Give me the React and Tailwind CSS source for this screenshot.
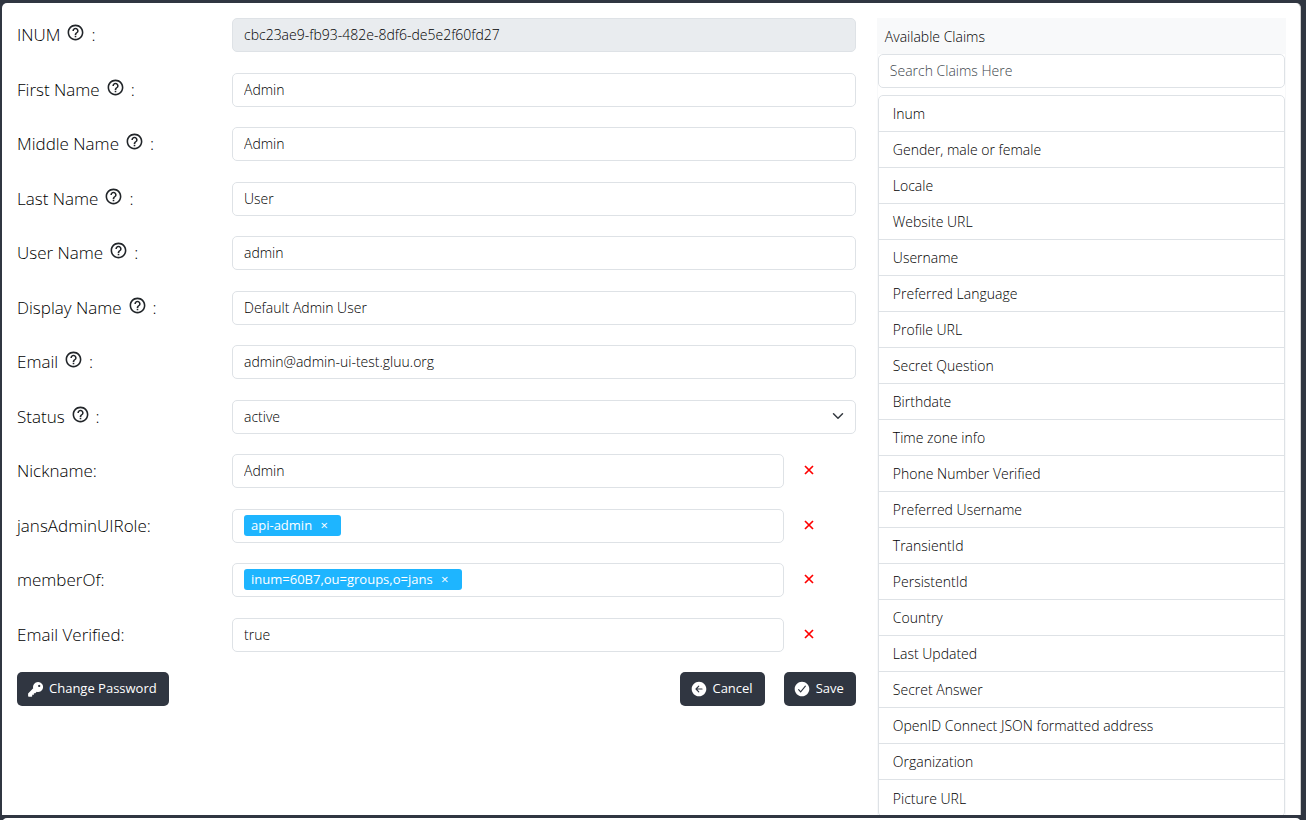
import React, { useState } from "react";
import { MdHelpOutline } from "react-icons/md";
import { IoArrowBackCircle, IoCheckmarkCircle } from "react-icons/io5";

const profileFields = [
  { id: "inum", label: "INUM", value: "cbc23ae9-fb93-482e-8df6-de5e2f60fd27", disabled: true },
  { id: "givenName", label: "First Name", value: "Admin" },
  { id: "middleName", label: "Middle Name", value: "Admin" },
  { id: "sn", label: "Last Name", value: "User" },
  { id: "userId", label: "User Name", value: "admin" },
  { id: "displayName", label: "Display Name", value: "Default Admin User" },
  { id: "mail", label: "Email", value: "admin@admin-ui-test.gluu.org" },
  { id: "status", label: "Status", value: "active", options: ["active", "inactive"] },
];

const initialClaims = [
  { id: "nickname", label: "Nickname", value: "Admin" },
  { id: "jansAdminUIRole", label: "jansAdminUIRole", tags: ["api-admin"] },
  { id: "memberOf", label: "memberOf", tags: ["inum=60B7,ou=groups,o=jans"] },
  { id: "emailVerified", label: "Email Verified", value: "true" },
];

const availableClaims = [
  "Inum",
  "Gender, male or female",
  "Locale",
  "Website URL",
  "Username",
  "Preferred Language",
  "Profile URL",
  "Secret Question",
  "Birthdate",
  "Time zone info",
  "Phone Number Verified",
  "Preferred Username",
  "TransientId",
  "PersistentId",
  "Country",
  "Last Updated",
  "Secret Answer",
  "OpenID Connect JSON formatted address",
  "Organization",
  "Picture URL",
];

const inputClass =
  "block h-[34px] w-full rounded-[5px] border border-[#dee2e6] bg-white px-[11px] pb-[2px] text-[14px] font-light text-black outline-none focus:border-[#86b7fe] disabled:bg-[#e9ecef]";

const KeyIcon = () => (
  <svg viewBox="0 0 15 15" className="size-[15px]" fill="currentColor">
    <path
      fillRule="evenodd"
      d="M10 0a5 5 0 1 1-1.3 9.8L7.3 11.2H5.9V12.8H4.2V14.1Q4.2 14.8 3.5 14.8H0.8Q0.1 14.8 0.1 14.1V11.5L5.2 6.3A5 5 0 0 1 10 0zM11.2 2.8a1.1 1.1 0 1 0 .01 0z"
    />
  </svg>
);

const FieldRow = ({ id, label, help, onRemove, children }) => (
  <div className="flex odd:mb-[21px] even:mb-5">
    <label htmlFor={id} className="flex h-[34px] w-[215px] shrink-0 items-center text-[17px] font-light whitespace-pre text-black">
      {label}
      {help && <MdHelpOutline className="mx-[6px] mb-[5px] size-[19px] text-[#212529]" />}
      {":"}
    </label>
    <div className="min-w-0 flex-1">{children}</div>
    {onRemove && (
      <div className="w-[72px] shrink-0 pl-[18px]">
        <button type="button" aria-label={`Remove ${label}`} onClick={onRemove} className="flex h-8 w-[14px] items-center justify-center">
          <svg viewBox="0 0 10 10" className="size-[10px]" stroke="#ff0000" strokeWidth="1.7" fill="none">
            <path d="M1 1 L9 9 M9 1 L1 9" />
          </svg>
        </button>
      </div>
    )}
  </div>
);

const TagInput = ({ id, tags }) => {
  const [selected, setSelected] = useState(tags);

  return (
    <div className="flex h-[34px] items-center rounded-[5px] border border-[#dee2e6] px-[11px]">
      {selected.map((tag) => (
        <span key={tag} className="mr-1 mb-px flex h-[21px] shrink-0 items-center rounded-[3px] bg-[#1eb5ff] pr-[5px] pl-[7px] text-[13px] text-white">
          {tag}
          <button
            type="button"
            aria-label={`Remove ${tag}`}
            onClick={() => setSelected(selected.filter((t) => t !== tag))}
            className="w-6 text-center"
          >
            ×
          </button>
        </span>
      ))}
      <input id={id} type="text" className="h-6 w-full min-w-0 text-[14px] font-light outline-none" />
    </div>
  );
};

const ActionButton = ({ icon, children }) => (
  <button type="button" className="flex h-[34px] items-center rounded-[5px] bg-[#303641] pr-[12px] pl-[11px] text-[13px] text-white">
    <span className="mr-[6px] flex w-[15px] justify-center">{icon}</span>
    {children}
  </button>
);

const App = () => {
  const [claims, setClaims] = useState(initialClaims);
  const [search, setSearch] = useState("");

  const visibleClaims = availableClaims.filter((claim) =>
    claim.toLowerCase().includes(search.toLowerCase())
  );

  return (
    <div className="h-screen overflow-hidden bg-[#303641] pt-[3px] pr-[5px] pl-[2px] font-['Open_Sans','Noto_Sans',sans-serif] text-[#212529]">
      <main className="grid h-[calc(100vh-8px)] grid-cols-[2.05fr_1fr] items-start gap-[21px] overflow-hidden rounded-t-[5px] border-r border-[#d0d0d0] bg-white pt-[15px] pr-[14px] pl-[15px]">
        <form className="min-w-0" onSubmit={(e) => e.preventDefault()}>
          <div>
            {profileFields.map((field) => (
              <FieldRow key={field.id} id={field.id} label={field.label} help>
                {field.options ? (
                  <div className="relative">
                    <select id={field.id} defaultValue={field.value} className={`${inputClass} appearance-none`}>
                      {field.options.map((option) => (
                        <option key={option}>{option}</option>
                      ))}
                    </select>
                    <svg viewBox="0 0 16 16" className="pointer-events-none absolute top-[10px] right-3 size-3" fill="none" stroke="#343a40" strokeWidth="2" strokeLinecap="round" strokeLinejoin="round">
                      <path d="m2 5 6 6 6-6" />
                    </svg>
                  </div>
                ) : (
                  <input id={field.id} type="text" defaultValue={field.value} disabled={field.disabled} className={inputClass} />
                )}
              </FieldRow>
            ))}
            {claims.map((claim) => (
              <FieldRow
                key={claim.id}
                id={claim.id}
                label={claim.label}
                onRemove={() => setClaims(claims.filter((c) => c.id !== claim.id))}
              >
                {claim.tags ? (
                  <TagInput id={claim.id} tags={claim.tags} />
                ) : (
                  <input id={claim.id} type="text" defaultValue={claim.value} className={inputClass} />
                )}
              </FieldRow>
            ))}
          </div>
          <div className="flex items-center">
            <ActionButton icon={<KeyIcon />}>Change Password</ActionButton>
            <div className="ml-auto flex gap-[19px]">
              <ActionButton icon={<IoArrowBackCircle className="size-[18px] shrink-0" />}>Cancel</ActionButton>
              <ActionButton icon={<IoCheckmarkCircle className="size-[18px] shrink-0" />}>Save</ActionButton>
            </div>
          </div>
        </form>

        <aside className="min-w-0 border-x border-[#f8f9fa]">
          <h2 className="flex h-9 items-center bg-[#f8f9fa] px-[7px] pt-px text-[14px] font-light text-black">Available Claims</h2>
          <input
            type="search"
            aria-label="Search Claims Here"
            placeholder="Search Claims Here"
            value={search}
            onChange={(e) => setSearch(e.target.value)}
            className={`${inputClass} placeholder:text-[#40464c]`}
          />
          <ul className="mt-[7px] rounded-[5px] border border-[#dee2e6]">
            {visibleClaims.map((claim) => (
              <li key={claim} className="h-9 border-b border-[#dee2e6] last:border-b-0">
                <button type="button" className="flex h-full w-full items-center px-[14px] text-left text-[14px] font-light text-black">
                  {claim}
                </button>
              </li>
            ))}
          </ul>
        </aside>
      </main>
      <div className="mt-[3px] h-5 rounded-t-[5px] bg-white" />
    </div>
  );
};

export default App;
